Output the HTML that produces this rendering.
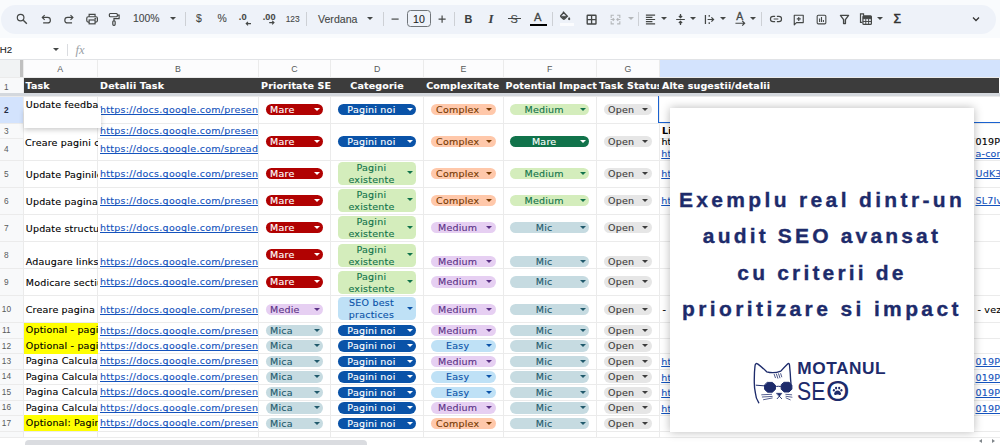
<!DOCTYPE html>
<html lang="ro"><head><meta charset="utf-8"><title>Audit SEO</title>
<style>
*{box-sizing:border-box;margin:0;padding:0}
html,body{width:1000px;height:445px;overflow:hidden;background:#fff}
body{position:relative;-webkit-text-stroke:0.12px currentColor;font-family:"DejaVu Sans","Liberation Sans",sans-serif;font-size:9.5px;color:#000}
#app{position:absolute;left:0;top:0;width:1000px;height:445px;overflow:hidden;background:#fff}
#app div,#app span,#app i{position:absolute}
.topbg{left:0;top:0;width:1000px;height:38px;background:#f9fbfd}
.tb{left:1px;top:4.5px;width:995px;height:29px;border-radius:15px;background:#eef2f9}
.tt{-webkit-text-stroke:0.1px currentColor;font-family:"Liberation Sans",sans-serif;font-size:10.4px;color:#444746;top:13px;line-height:12px;white-space:nowrap}
.sep{top:12px;width:1px;height:14px;background:#cdd0d5}
.dd{width:0;height:0;border-left:3px solid transparent;border-right:3px solid transparent;border-top:3.2px solid #444746;top:18px}
svg{position:absolute;overflow:visible}
.fb{left:0;top:38px;width:1000px;height:21px;background:#fff}
.hl{left:0;width:1000px;height:1px;background:#ebebeb}
.vl{top:60px;width:1px;height:377px;background:#ebebeb}
.rhbg{left:0;top:60px;width:23px;height:377px;background:#f8f9fa}
.corner{left:0;top:60px;width:20px;height:17px;background:#f1f3f4}
.frow{left:0;top:93.3px;width:1000px;height:2.7px;background:#d4d8dd}
.chbg{left:0;top:60px;width:1000px;height:17px;background:#fcfcfd}
.selcol{background:#d3e3fd}
.selrow{background:#d3e3fd}
.freeze{left:20px;top:60px;width:3px;height:17px;background:#c0c0c0}
.cl{-webkit-text-stroke:0;top:60.7px;height:17px;line-height:17px;text-align:center;font-family:"Liberation Sans",sans-serif;font-size:8.8px;color:#575a5a}
.rn{-webkit-text-stroke:0;left:-10.5px;width:33.8px;text-align:center;font-family:"Liberation Sans",sans-serif;font-size:8.3px;color:#575a5a}
.rn.b{font-weight:bold;color:#1f2a44}
.dark{background:#3c3c3c}
.hd{top:77.5px;height:16px;line-height:16.5px;color:#fff;font-weight:bold;font-size:9.5px;white-space:nowrap;overflow:hidden;padding-left:2.5px;letter-spacing:0.17px}
.hd.c{text-align:center;padding-left:0}
.ca{overflow:hidden;white-space:nowrap;font-size:9.5px;letter-spacing:0.18px}
.ca .mid{left:2px;top:calc(50% + 1.1px);transform:translateY(-50%);line-height:12px}
.lk{text-decoration-skip-ink:none;text-underline-offset:1px;letter-spacing:0.27px;color:#1453bd;text-decoration:underline;white-space:nowrap;overflow:hidden;height:13px;line-height:13px;font-size:9.5px}
.chip{border-radius:6px;white-space:nowrap;overflow:hidden}
.chip .ct{left:0;right:11px;top:0;bottom:0;text-align:center;font-size:9.5px;letter-spacing:0.22px;line-height:12.7px}
.chip.m{border-radius:4.5px}
.chip.m .ct{line-height:11.9px;top:0.1px}
.chip .ar{right:3.7px;top:50%;margin-top:-1.9px;width:0;height:0;border-left:3.7px solid transparent;border-right:3.7px solid transparent;border-top:3.9px solid #000}
.chip.la .ct{text-align:left;left:4.5px}
.ht{font-size:9.5px;letter-spacing:0.2px;white-space:nowrap;line-height:11px}
.ht.b{font-weight:bold}
.ht.u{color:#1453bd;text-decoration:underline;text-decoration-skip-ink:none;text-underline-offset:1px}
.sel{border:1.3px solid #1a62d0}
.sb{left:0;top:437px;width:1000px;height:8px;background:#fff;border-top:1px solid #ececec}
.thumb{left:25px;top:439.5px;width:342px;height:8px;border-radius:4px;background:#dadce0}
.redact{left:24px;top:107.800px;width:76.800px;height:20px;background:#fff;box-shadow:0 2px 5px rgba(0,0,0,.2)}
.card{left:670px;top:107.5px;width:304px;height:324.5px;background:#fff;box-shadow:0 0 9px rgba(0,0,0,.28)}
.ctext{-webkit-text-stroke:0.35px #1d2b6b;left:0;width:304px;text-align:center;font-family:"Liberation Sans",sans-serif;font-weight:bold;font-size:21px;letter-spacing:3.17px;color:#1d2b6b;white-space:nowrap;line-height:26px}
.lg1{left:128px;top:251px;font-family:"Liberation Sans",sans-serif;font-weight:bold;font-size:18px;color:#1d2b6b;line-height:20px;letter-spacing:0.2px}
.lg2{left:128px;top:269px;font-family:"Liberation Sans",sans-serif;font-size:28px;color:#1d2b6b;line-height:30px}
</style></head><body>
<div id="app">
<div class="topbg"></div>
<div class="tb"></div>
<svg style="left:14.5px;top:12.1px" width="14.2" height="14.2" viewBox="0 0 24 24" fill="none" stroke="#444746" stroke-width="2" ><circle cx="9.5" cy="9.5" r="5.6"/><path d="M14 14l6 6" stroke-width="2.4"/></svg>
<svg style="left:39.3px;top:12.1px" width="14.2" height="14.2" viewBox="0 0 24 24" fill="none" stroke="#444746" stroke-width="2" ><path d="M7 18.5h7.5a4.75 4.75 0 0 0 0-9.5H6"/><path d="M9.6 5.2L5.6 9.2l4 4" /></svg>
<svg style="left:62.3px;top:12.1px" width="14.2" height="14.2" viewBox="0 0 24 24" fill="none" stroke="#444746" stroke-width="2" ><path d="M17 18.5H9.5a4.75 4.75 0 0 1 0-9.5H18"/><path d="M14.4 5.2l4 4-4 4" /></svg>
<svg style="left:85.3px;top:12.1px" width="14.2" height="14.2" viewBox="0 0 24 24" fill="none" stroke="#444746" stroke-width="2" ><path d="M7 8V4h10v4"/><rect x="3" y="8" width="18" height="9" rx="2.5"/><rect x="7" y="13.5" width="10" height="6.5" fill="#edf2fa"/><circle cx="17.5" cy="11.2" r="0.6" fill="#444746"/></svg>
<svg style="left:107.4px;top:12.1px" width="14.2" height="14.2" viewBox="0 0 24 24" fill="none" stroke="#444746" stroke-width="2" ><rect x="4" y="2.5" width="13.5" height="5.5" rx="1.6"/><path d="M17.5 5.2h3v6H11.800v3.800"/><rect x="9.800" y="15" width="4" height="7.500" rx="1.6"/></svg>
<div class="tt" style="left:133px;font-size:10.4px">100%</div>
<div class="dd" style="left:169.5px;top:17.4px;border-top-color:#444746"></div>
<div class="sep" style="left:184.5px"></div>
<div class="tt" style="left:196px;">$</div>
<div class="tt" style="left:217.5px;">%</div>
<div class="tt" style="left:238.8px;font-size:9.3px;top:10.8px;font-weight:bold">.0</div>
<svg style="left:244.6px;top:19.6px" width="7.2" height="7.2" viewBox="0 0 24 24" fill="none" stroke="#444746" stroke-width="2" ><path d="M4 12h16M10 6l-6 6 6 6" stroke-width="3.6"/></svg>
<div class="tt" style="left:262.8px;font-size:9.1px;top:10.8px;font-weight:bold">.00</div>
<svg style="left:267.9px;top:19.4px" width="7.2" height="7.2" viewBox="0 0 24 24" fill="none" stroke="#444746" stroke-width="2" ><path d="M4 12h16M14 6l6 6-6 6" stroke-width="3.6"/></svg>
<div class="tt" style="left:285.7px;font-size:8.4px;top:12.8px">123</div>
<div class="sep" style="left:306.0px"></div>
<div class="tt" style="left:318px;font-size:10.6px">Verdana</div>
<div class="dd" style="left:367.0px;top:17.4px;border-top-color:#444746"></div>
<div class="sep" style="left:383.2px"></div>
<svg style="left:387.9px;top:12.1px" width="14.2" height="14.2" viewBox="0 0 24 24" fill="none" stroke="#444746" stroke-width="2" ><path d="M6 12h12"/></svg>
<div style="left:407px;top:10px;width:24px;height:17px;border:0.9px solid #70757a;border-radius:3.5px"></div>
<div class="tt" style="left:413px;font-size:10.6px;color:#1f1f1f">10</div>
<svg style="left:434.9px;top:12.1px" width="14.2" height="14.2" viewBox="0 0 24 24" fill="none" stroke="#444746" stroke-width="2" ><path d="M6 12h12M12 6v12"/></svg>
<div class="sep" style="left:454.0px"></div>
<div class="tt" style="left:464.6px;font-weight:bold;font-size:10.8px;color:#3c4043">B</div>
<div class="tt" style="left:488.6px;font-style:italic;font-family:'Liberation Serif',serif;font-weight:bold;font-size:12.6px;color:#3c4043;top:12.6px">I</div>
<div class="tt" style="left:510.5px;font-size:11px">S</div>
<div style="left:508px;top:18.2px;width:13px;height:1.3px;background:#444746"></div>
<div class="tt" style="left:534px;font-size:11.2px;top:10.6px;-webkit-text-stroke:0.3px #444746">A</div>
<div style="left:529.5px;top:23.5px;width:17px;height:2.6px;background:#000"></div>
<div class="sep" style="left:552.0px"></div>
<svg style="left:559.2px;top:10.1px" width="12.5" height="12.5" viewBox="0 0 24 24" fill="none" stroke="#444746" stroke-width="2" ><path d="M7.500 3.500L16 12l-5.500 5.500a1.600 1.600 0 0 1-2.200 0L3.600 12.800a1.600 1.600 0 0 1 0-2.200L10.200 4" stroke-width="2.6"/><path d="M4.500 12h10.500l-5.700 5.200z" fill="#444746" stroke-width="1"/><path d="M19.500 13.500s-2.200 2.600-2.200 4a2.200 2.200 0 0 0 4.400 0c0-1.400-2.200-4-2.200-4z" fill="#444746" stroke="none"/></svg>
<div style="left:559.5px;top:23.300px;width:14px;height:2.400px;background:rgba(255,255,255,.75)"></div>
<svg style="left:584.7px;top:12.6px" width="13.2" height="13.2" viewBox="0 0 24 24" fill="none" stroke="#444746" stroke-width="2" ><rect x="4" y="4" width="16" height="16" rx="1" stroke-width="2.500"/><path d="M12 4v16M4 12h16" stroke-width="2.400"/></svg>
<svg style="left:609.2px;top:12.7px" width="13" height="13" viewBox="0 0 24 24" fill="none" stroke="#444746" stroke-width="2" ><path d="M9 4H4v5M15 4h5v5M9 20H4v-5M15 20h5v-5M3 12h6M21 12h-6M7 9.5l2.5 2.5L7 14.5M17 9.5L14.5 12l2.5 2.5" stroke="#b4b7ba"/></svg>
<div class="dd" style="left:627.7px;top:17.4px;border-top-color:#b4b7ba"></div>
<div class="sep" style="left:637.5px"></div>
<svg style="left:644.3px;top:12.7px" width="13" height="13" viewBox="0 0 24 24" fill="none" stroke="#444746" stroke-width="2" ><path d="M3.500 4h17M3.500 8h12M3.500 12h17M3.500 16h12M3.500 20h17" stroke-width="2.300"/></svg>
<div class="dd" style="left:660.7px;top:17.4px;border-top-color:#444746"></div>
<svg style="left:674.0px;top:12.7px" width="13" height="13" viewBox="0 0 24 24" fill="none" stroke="#444746" stroke-width="2" ><path d="M4 12h16M12 2v6M9 5.500l3 3 3-3M12 22v-6M9 18.500l3-3 3 3" stroke-width="2.300"/></svg>
<div class="dd" style="left:690.0px;top:17.4px;border-top-color:#444746"></div>
<svg style="left:703.0px;top:12.7px" width="13" height="13" viewBox="0 0 24 24" fill="none" stroke="#444746" stroke-width="2" ><path d="M4.500 3.500v17M11.500 3.500v3.500M11.500 17v3.500M8.500 12h10.500M15.500 8l4 4-4 4" stroke-width="2.300"/></svg>
<div class="dd" style="left:720.0px;top:17.4px;border-top-color:#444746"></div>
<div class="tt" style="left:736.3px;font-size:10.400px;top:11.300px;-webkit-text-stroke:0.300px #444746">A</div>
<svg style="left:735.0px;top:17.9px" width="10.5" height="10.5" viewBox="0 0 24 24" fill="none" stroke="#444746" stroke-width="2" ><path d="M1 12h21M16.500 6.500l5.500 5.500-5.500 5.500" stroke-width="2.800"/></svg>
<div class="dd" style="left:750.0px;top:17.4px;border-top-color:#444746"></div>
<div class="sep" style="left:760.5px"></div>
<svg style="left:768.7px;top:12.2px" width="14" height="14" viewBox="0 0 24 24" fill="none" stroke="#444746" stroke-width="2" ><path d="M10.5 7.5H7a4.5 4.5 0 0 0 0 9h3.5M13.5 7.5H17a4.5 4.5 0 0 1 0 9h-3.5M8 12h8"/></svg>
<svg style="left:792.0px;top:12.6px" width="13.5" height="13.5" viewBox="0 0 24 24" fill="none" stroke="#444746" stroke-width="2" ><path d="M4 4h16v13H8l-4 4z" stroke-linejoin="round"/><path d="M12 7v7M8.5 10.5h7"/></svg>
<svg style="left:815.2px;top:12.7px" width="13" height="13" viewBox="0 0 24 24" fill="none" stroke="#444746" stroke-width="2" ><rect x="4" y="4" width="16" height="16" rx="2"/><path d="M8.5 10v6.5M12 7.5v9M15.5 13v3.5"/></svg>
<svg style="left:837.8px;top:12.7px" width="13" height="13" viewBox="0 0 24 24" fill="none" stroke="#444746" stroke-width="2" ><path d="M4.500 4.500h15l-5.800 7.800v7.200h-3.400v-7.200z" stroke-linejoin="round" stroke-width="2.500"/></svg>
<svg style="left:858.8px;top:11.9px" width="14.5" height="14.5" viewBox="0 0 24 24" fill="none" stroke="#444746" stroke-width="2" ><path d="M7.5 6V3h-5v14h3" /><rect x="6.5" y="6.5" width="14" height="14" rx="1.5"/><rect x="6.500" y="6.500" width="14" height="4.500" fill="#444746" stroke="none"/><path d="M6.5 11h14M11.2 11v9.5M15.9 11v9.5M6.5 15.7h14" stroke-width="1.6"/></svg>
<div class="dd" style="left:876.5px;top:17.4px;border-top-color:#444746"></div>
<div class="tt" style="left:893.6px;font-size:12.200px;top:13.400px;color:#333;-webkit-text-stroke:0.500px #333">Σ</div>
<svg style="left:969.5px;top:13.0px" width="12" height="12" viewBox="0 0 24 24" fill="none" stroke="#444746" stroke-width="2" ><path d="M6 9l6 6 6-6" stroke-width="2.500" stroke="#333"/></svg>
<div class="fb"></div>
<div class="tt" style="left:-0.3px;top:44.200px;color:#202124;font-size:9.700px">H2</div>
<div class="dd" style="left:52.5px;top:48px"></div>
<div class="sep" style="left:67px;top:44px;height:12px;background:#dadce0"></div>
<div style="left:75.500px;top:43.300px;font-family:'Liberation Serif',serif;font-style:italic;font-size:12.500px;color:#9aa0a6;line-height:14px;-webkit-text-stroke:0">fx</div>
<div style="left:0;top:58.5px;width:1000px;height:1px;background:#e1e3e6"></div>
<div class="hl" style="top:76.5px"></div>
<div class="hl" style="top:95.5px"></div>
<div class="hl" style="top:122.5px"></div>
<div class="hl" style="top:137.9px"></div>
<div class="hl" style="top:159.5px"></div>
<div class="hl" style="top:186.5px"></div>
<div class="hl" style="top:213.5px"></div>
<div class="hl" style="top:240.5px"></div>
<div class="hl" style="top:267.5px"></div>
<div class="hl" style="top:294.5px"></div>
<div class="hl" style="top:322.3px"></div>
<div class="hl" style="top:337.8px"></div>
<div class="hl" style="top:353.2px"></div>
<div class="hl" style="top:368.7px"></div>
<div class="hl" style="top:384.1px"></div>
<div class="hl" style="top:399.6px"></div>
<div class="hl" style="top:415.1px"></div>
<div class="hl" style="top:430.5px"></div>
<div class="hl" style="top:436.5px"></div>
<div style="left:23px;top:137.4px;width:74.6px;height:2px;background:#fff"></div>
<div style="left:258.5px;top:137.4px;width:400.9px;height:2px;background:#fff"></div>
<div class="vl" style="left:22.5px"></div>
<div class="vl" style="left:97.1px"></div>
<div class="vl" style="left:258.0px"></div>
<div class="vl" style="left:330.0px"></div>
<div class="vl" style="left:423.2px"></div>
<div class="vl" style="left:502.5px"></div>
<div class="vl" style="left:596.1px"></div>
<div class="vl" style="left:658.9px"></div>
<div class="rhbg"></div><div class="chbg"></div><div class="corner"></div>
<div class="selcol" style="left:659.4px;top:60px;width:340.6px;height:17px"></div>
<div class="selrow" style="left:0;top:96px;width:23px;height:27px"></div>
<div class="freeze"></div>
<div class="hl" style="top:76.5px;width:23px"></div>
<div class="hl" style="top:95.5px;width:23px"></div>
<div class="hl" style="top:122.5px;width:23px"></div>
<div class="hl" style="top:137.9px;width:23px"></div>
<div class="hl" style="top:159.5px;width:23px"></div>
<div class="hl" style="top:186.5px;width:23px"></div>
<div class="hl" style="top:213.5px;width:23px"></div>
<div class="hl" style="top:240.5px;width:23px"></div>
<div class="hl" style="top:267.5px;width:23px"></div>
<div class="hl" style="top:294.5px;width:23px"></div>
<div class="hl" style="top:322.3px;width:23px"></div>
<div class="hl" style="top:337.8px;width:23px"></div>
<div class="hl" style="top:353.2px;width:23px"></div>
<div class="hl" style="top:368.7px;width:23px"></div>
<div class="hl" style="top:384.1px;width:23px"></div>
<div class="hl" style="top:399.6px;width:23px"></div>
<div class="hl" style="top:415.1px;width:23px"></div>
<div class="hl" style="top:430.5px;width:23px"></div>
<div class="hl" style="top:436.5px;width:23px"></div>
<div class="vl" style="left:22.5px;height:17px"></div>
<div class="vl" style="left:97.1px;height:17px"></div>
<div class="vl" style="left:258.0px;height:17px"></div>
<div class="vl" style="left:330.0px;height:17px"></div>
<div class="vl" style="left:423.2px;height:17px"></div>
<div class="vl" style="left:502.5px;height:17px"></div>
<div class="vl" style="left:596.1px;height:17px"></div>
<div class="vl" style="left:658.9px;height:17px"></div>
<div class="frow"></div>
<div class="cl" style="left:23px;width:74.6px">A</div>
<div class="cl" style="left:97.6px;width:160.9px">B</div>
<div class="cl" style="left:258.5px;width:72.0px">C</div>
<div class="cl" style="left:330.5px;width:93.19999999999999px">D</div>
<div class="cl" style="left:423.7px;width:79.30000000000001px">E</div>
<div class="cl" style="left:503px;width:93.60000000000002px">F</div>
<div class="cl" style="left:596.6px;width:62.799999999999955px">G</div>
<div class="rn" style="top:77.7px;height:19px;line-height:19px">1</div>
<div class="rn b" style="top:96.7px;height:27px;line-height:27px">2</div>
<div class="rn" style="top:123.7px;height:15.400000000000006px;line-height:15.400000000000006px">3</div>
<div class="rn" style="top:139.1px;height:21.599999999999994px;line-height:21.599999999999994px">4</div>
<div class="rn" style="top:160.7px;height:27px;line-height:27px">5</div>
<div class="rn" style="top:187.7px;height:27px;line-height:27px">6</div>
<div class="rn" style="top:214.7px;height:27px;line-height:27px">7</div>
<div class="rn" style="top:241.7px;height:27px;line-height:27px">8</div>
<div class="rn" style="top:268.7px;height:27px;line-height:27px">9</div>
<div class="rn" style="top:295.7px;height:27.80000000000001px;line-height:27.80000000000001px">10</div>
<div class="rn" style="top:323.0px;height:15.5px;line-height:15.5px">11</div>
<div class="rn" style="top:338.5px;height:15.399999999999977px;line-height:15.399999999999977px">12</div>
<div class="rn" style="top:353.9px;height:15.5px;line-height:15.5px">13</div>
<div class="rn" style="top:369.4px;height:15.400000000000034px;line-height:15.400000000000034px">14</div>
<div class="rn" style="top:384.8px;height:15.5px;line-height:15.5px">15</div>
<div class="rn" style="top:400.3px;height:15.5px;line-height:15.5px">16</div>
<div class="rn" style="top:415.8px;height:15.399999999999977px;line-height:15.399999999999977px">17</div>
<div class="dark" style="left:23.5px;top:77.7px;width:975px;height:15.6px"></div>
<div class="hd l" style="left:23px;width:74.6px">Task</div>
<div class="hd l" style="left:97.6px;width:160.9px">Detalii Task</div>
<div class="hd l" style="left:258.5px;width:72.0px">Prioritate SE</div>
<div class="hd c" style="left:330.5px;width:93.19999999999999px">Categorie</div>
<div class="hd l" style="left:423.7px;width:79.30000000000001px">Complexitate</div>
<div class="hd l" style="left:503px;width:93.60000000000002px">Potential Impact</div>
<div class="hd l" style="left:596.6px;width:62.799999999999955px">Task Status</div>
<div class="hd l" style="left:659.4px;width:340.6px">Alte sugestii/detalii</div>
<div class="ca" style="left:23px;top:96px;width:74.6px;height:27px"><span style="position:absolute;left:2.8px;top:2.9px">Update feedba</span></div>
<div class="ca" style="left:23px;top:123px;width:74.6px;height:38.6px"><span class="mid">Creare pagini c</span></div>
<div class="ca" style="left:23.8px;top:159.8px;width:74.1px;height:27.2px;"><span class="mid" style="margin-top:0.3px">Update Paginile</span></div>
<div class="ca" style="left:23.8px;top:186.8px;width:74.1px;height:27.2px;"><span class="mid" style="margin-top:0.3px">Update pagina</span></div>
<div class="ca" style="left:23.8px;top:213.8px;width:74.1px;height:27.2px;"><span class="mid" style="margin-top:0.3px">Update structu</span></div>
<div class="ca" style="left:23px;top:241px;width:74.6px;height:27px"><span style="position:absolute;left:2.8px;bottom:1px">Adaugare links</span></div>
<div class="ca" style="left:23.8px;top:267.8px;width:74.1px;height:27.2px;"><span class="mid" style="margin-top:0.3px">Modicare sectiu</span></div>
<div class="ca" style="left:23.8px;top:294.8px;width:74.1px;height:28.00000000000001px;"><span class="mid" style="margin-top:0.3px">Creare pagina</span></div>
<div class="ca" style="left:23.8px;top:322.6px;width:74.1px;height:15.7px;background:#ffff00;"><span class="mid" style="margin-top:-1.1px">Optional - pagi</span></div>
<div class="ca" style="left:23.8px;top:338.1px;width:74.1px;height:15.599999999999977px;background:#ffff00;"><span class="mid" style="margin-top:-1.1px">Optional - pagi</span></div>
<div class="ca" style="left:23.8px;top:353.5px;width:74.1px;height:15.7px;"><span class="mid" style="margin-top:-1.1px">Pagina Calculat</span></div>
<div class="ca" style="left:23.8px;top:369.0px;width:74.1px;height:15.600000000000033px;"><span class="mid" style="margin-top:-1.1px">Pagina Calculat</span></div>
<div class="ca" style="left:23.8px;top:384.40000000000003px;width:74.1px;height:15.7px;"><span class="mid" style="margin-top:-1.1px">Pagina Calculat</span></div>
<div class="ca" style="left:23.8px;top:399.90000000000003px;width:74.1px;height:15.7px;"><span class="mid" style="margin-top:-1.1px">Pagina Calculat</span></div>
<div class="ca" style="left:23.8px;top:415.40000000000003px;width:74.1px;height:15.599999999999977px;background:#ffff00;"><span class="mid" style="margin-top:-1.1px">Optional: Pagin</span></div>
<div class="lk" style="left:100.0px;top:103.4px;width:157.9px">https://docs.google.com/presen</div>
<div class="lk" style="left:100.0px;top:123.9px;width:157.9px">https://docs.google.com/presen</div>
<div class="lk" style="left:100.0px;top:142.4px;width:157.9px">https://docs.google.com/spread</div>
<div class="lk" style="left:100.0px;top:166.9px;width:157.9px">https://docs.google.com/presen</div>
<div class="lk" style="left:100.0px;top:193.9px;width:157.9px">https://docs.google.com/presen</div>
<div class="lk" style="left:100.0px;top:220.9px;width:157.9px">https://docs.google.com/presen</div>
<div class="lk" style="left:100.0px;top:254.9px;width:157.9px">https://docs.google.com/presen</div>
<div class="lk" style="left:100.0px;top:274.9px;width:157.9px">https://docs.google.com/presen</div>
<div class="lk" style="left:100.0px;top:302.9px;width:157.9px">https://docs.google.com/presen</div>
<div class="lk" style="left:100.0px;top:323.5px;width:157.9px">https://docs.google.com/presen</div>
<div class="lk" style="left:100.0px;top:338.95px;width:157.9px">https://docs.google.com/presen</div>
<div class="lk" style="left:100.0px;top:354.4px;width:157.9px">https://docs.google.com/presen</div>
<div class="lk" style="left:100.0px;top:369.84999999999997px;width:157.9px">https://docs.google.com/presen</div>
<div class="lk" style="left:100.0px;top:385.3px;width:157.9px">https://docs.google.com/presen</div>
<div class="lk" style="left:100.0px;top:400.8px;width:157.9px">https://docs.google.com/presen</div>
<div class="lk" style="left:100.0px;top:416.25px;width:157.9px">https://docs.google.com/presen</div>
<div class="chip la" style="left:265.5px;top:103.9px;width:57.69999999999999px;height:11.6px;background:#b10202;color:#fff"><span class="ct">Mare</span><i class="ar" style="border-top-color:#fff"></i></div>
<div class="chip la" style="left:265.5px;top:135.9px;width:57.69999999999999px;height:11.6px;background:#b10202;color:#fff"><span class="ct">Mare</span><i class="ar" style="border-top-color:#fff"></i></div>
<div class="chip la" style="left:265.5px;top:167.7px;width:57.69999999999999px;height:11.6px;background:#b10202;color:#fff"><span class="ct">Mare</span><i class="ar" style="border-top-color:#fff"></i></div>
<div class="chip la" style="left:265.5px;top:194.7px;width:57.69999999999999px;height:11.6px;background:#b10202;color:#fff"><span class="ct">Mare</span><i class="ar" style="border-top-color:#fff"></i></div>
<div class="chip la" style="left:265.5px;top:221.7px;width:57.69999999999999px;height:11.6px;background:#b10202;color:#fff"><span class="ct">Mare</span><i class="ar" style="border-top-color:#fff"></i></div>
<div class="chip la" style="left:265.5px;top:248.7px;width:57.69999999999999px;height:11.6px;background:#b10202;color:#fff"><span class="ct">Mare</span><i class="ar" style="border-top-color:#fff"></i></div>
<div class="chip la" style="left:265.5px;top:276.1px;width:57.69999999999999px;height:11.6px;background:#b10202;color:#fff"><span class="ct">Mare</span><i class="ar" style="border-top-color:#fff"></i></div>
<div class="chip la" style="left:265.5px;top:303.8px;width:57.69999999999999px;height:11.6px;background:#e6cff2;color:#5a3286"><span class="ct">Medie</span><i class="ar" style="border-top-color:#5a3286"></i></div>
<div class="chip la" style="left:265.5px;top:324.8px;width:57.69999999999999px;height:11.6px;background:#c6dbe1;color:#215a6c"><span class="ct">Mica</span><i class="ar" style="border-top-color:#215a6c"></i></div>
<div class="chip la" style="left:265.5px;top:340.2px;width:57.69999999999999px;height:11.6px;background:#c6dbe1;color:#215a6c"><span class="ct">Mica</span><i class="ar" style="border-top-color:#215a6c"></i></div>
<div class="chip la" style="left:265.5px;top:355.7px;width:57.69999999999999px;height:11.6px;background:#c6dbe1;color:#215a6c"><span class="ct">Mica</span><i class="ar" style="border-top-color:#215a6c"></i></div>
<div class="chip la" style="left:265.5px;top:371.1px;width:57.69999999999999px;height:11.6px;background:#c6dbe1;color:#215a6c"><span class="ct">Mica</span><i class="ar" style="border-top-color:#215a6c"></i></div>
<div class="chip la" style="left:265.5px;top:386.6px;width:57.69999999999999px;height:11.6px;background:#c6dbe1;color:#215a6c"><span class="ct">Mica</span><i class="ar" style="border-top-color:#215a6c"></i></div>
<div class="chip la" style="left:265.5px;top:402.1px;width:57.69999999999999px;height:11.6px;background:#c6dbe1;color:#215a6c"><span class="ct">Mica</span><i class="ar" style="border-top-color:#215a6c"></i></div>
<div class="chip la" style="left:265.5px;top:417.6px;width:57.69999999999999px;height:11.6px;background:#c6dbe1;color:#215a6c"><span class="ct">Mica</span><i class="ar" style="border-top-color:#215a6c"></i></div>
<div class="chip" style="left:337.5px;top:103.9px;width:78.89999999999998px;height:11.6px;background:#0a53a8;color:#fff"><span class="ct">Pagini noi</span><i class="ar" style="border-top-color:#fff"></i></div>
<div class="chip" style="left:337.5px;top:135.9px;width:78.89999999999998px;height:11.6px;background:#0a53a8;color:#fff"><span class="ct">Pagini noi</span><i class="ar" style="border-top-color:#fff"></i></div>
<div class="chip m" style="left:337.5px;top:161.8px;width:78.89999999999998px;height:23px;background:#d4edbc;color:#11734b"><span class="ct">Pagini<br>existente</span><i class="ar" style="border-top-color:#11734b"></i></div>
<div class="chip m" style="left:337.5px;top:188.8px;width:78.89999999999998px;height:23px;background:#d4edbc;color:#11734b"><span class="ct">Pagini<br>existente</span><i class="ar" style="border-top-color:#11734b"></i></div>
<div class="chip m" style="left:337.5px;top:216.0px;width:78.89999999999998px;height:23px;background:#d4edbc;color:#11734b"><span class="ct">Pagini<br>existente</span><i class="ar" style="border-top-color:#11734b"></i></div>
<div class="chip m" style="left:337.5px;top:243.5px;width:78.89999999999998px;height:23px;background:#d4edbc;color:#11734b"><span class="ct">Pagini<br>existente</span><i class="ar" style="border-top-color:#11734b"></i></div>
<div class="chip m" style="left:337.5px;top:270.5px;width:78.89999999999998px;height:23px;background:#d4edbc;color:#11734b"><span class="ct">Pagini<br>existente</span><i class="ar" style="border-top-color:#11734b"></i></div>
<div class="chip m" style="left:337.5px;top:297.3px;width:78.89999999999998px;height:23px;background:#bfe1f6;color:#0a53a8"><span class="ct">SEO best<br>practices</span><i class="ar" style="border-top-color:#0a53a8"></i></div>
<div class="chip" style="left:337.5px;top:324.8px;width:78.89999999999998px;height:11.6px;background:#0a53a8;color:#fff"><span class="ct">Pagini noi</span><i class="ar" style="border-top-color:#fff"></i></div>
<div class="chip" style="left:337.5px;top:340.2px;width:78.89999999999998px;height:11.6px;background:#0a53a8;color:#fff"><span class="ct">Pagini noi</span><i class="ar" style="border-top-color:#fff"></i></div>
<div class="chip" style="left:337.5px;top:355.7px;width:78.89999999999998px;height:11.6px;background:#0a53a8;color:#fff"><span class="ct">Pagini noi</span><i class="ar" style="border-top-color:#fff"></i></div>
<div class="chip" style="left:337.5px;top:371.1px;width:78.89999999999998px;height:11.6px;background:#0a53a8;color:#fff"><span class="ct">Pagini noi</span><i class="ar" style="border-top-color:#fff"></i></div>
<div class="chip" style="left:337.5px;top:386.6px;width:78.89999999999998px;height:11.6px;background:#0a53a8;color:#fff"><span class="ct">Pagini noi</span><i class="ar" style="border-top-color:#fff"></i></div>
<div class="chip" style="left:337.5px;top:402.1px;width:78.89999999999998px;height:11.6px;background:#0a53a8;color:#fff"><span class="ct">Pagini noi</span><i class="ar" style="border-top-color:#fff"></i></div>
<div class="chip" style="left:337.5px;top:417.6px;width:78.89999999999998px;height:11.6px;background:#0a53a8;color:#fff"><span class="ct">Pagini noi</span><i class="ar" style="border-top-color:#fff"></i></div>
<div class="chip" style="left:430.7px;top:103.9px;width:65.0px;height:11.6px;background:#ffc8aa;color:#753800"><span class="ct">Complex</span><i class="ar" style="border-top-color:#753800"></i></div>
<div class="chip" style="left:430.7px;top:135.9px;width:65.0px;height:11.6px;background:#ffc8aa;color:#753800"><span class="ct">Complex</span><i class="ar" style="border-top-color:#753800"></i></div>
<div class="chip" style="left:430.7px;top:167.7px;width:65.0px;height:11.6px;background:#ffc8aa;color:#753800"><span class="ct">Complex</span><i class="ar" style="border-top-color:#753800"></i></div>
<div class="chip" style="left:430.7px;top:194.7px;width:65.0px;height:11.6px;background:#ffc8aa;color:#753800"><span class="ct">Complex</span><i class="ar" style="border-top-color:#753800"></i></div>
<div class="chip" style="left:430.7px;top:221.7px;width:65.0px;height:11.6px;background:#e6cff2;color:#5a3286"><span class="ct">Medium</span><i class="ar" style="border-top-color:#5a3286"></i></div>
<div class="chip" style="left:430.7px;top:255.8px;width:65.0px;height:11.6px;background:#e6cff2;color:#5a3286"><span class="ct">Medium</span><i class="ar" style="border-top-color:#5a3286"></i></div>
<div class="chip" style="left:430.7px;top:276.1px;width:65.0px;height:11.6px;background:#e6cff2;color:#5a3286"><span class="ct">Medium</span><i class="ar" style="border-top-color:#5a3286"></i></div>
<div class="chip" style="left:430.7px;top:303.8px;width:65.0px;height:11.6px;background:#e6cff2;color:#5a3286"><span class="ct">Medium</span><i class="ar" style="border-top-color:#5a3286"></i></div>
<div class="chip" style="left:430.7px;top:324.8px;width:65.0px;height:11.6px;background:#e6cff2;color:#5a3286"><span class="ct">Medium</span><i class="ar" style="border-top-color:#5a3286"></i></div>
<div class="chip" style="left:430.7px;top:340.2px;width:65.0px;height:11.6px;background:#bfe1f6;color:#0a53a8"><span class="ct">Easy</span><i class="ar" style="border-top-color:#0a53a8"></i></div>
<div class="chip" style="left:430.7px;top:355.7px;width:65.0px;height:11.6px;background:#e6cff2;color:#5a3286"><span class="ct">Medium</span><i class="ar" style="border-top-color:#5a3286"></i></div>
<div class="chip" style="left:430.7px;top:371.1px;width:65.0px;height:11.6px;background:#bfe1f6;color:#0a53a8"><span class="ct">Easy</span><i class="ar" style="border-top-color:#0a53a8"></i></div>
<div class="chip" style="left:430.7px;top:386.6px;width:65.0px;height:11.6px;background:#bfe1f6;color:#0a53a8"><span class="ct">Easy</span><i class="ar" style="border-top-color:#0a53a8"></i></div>
<div class="chip" style="left:430.7px;top:402.1px;width:65.0px;height:11.6px;background:#e6cff2;color:#5a3286"><span class="ct">Medium</span><i class="ar" style="border-top-color:#5a3286"></i></div>
<div class="chip" style="left:430.7px;top:417.6px;width:65.0px;height:11.6px;background:#ffc8aa;color:#753800"><span class="ct">Complex</span><i class="ar" style="border-top-color:#753800"></i></div>
<div class="chip" style="left:510px;top:103.9px;width:79.30000000000007px;height:11.6px;background:#d4edbc;color:#11734b"><span class="ct">Medium</span><i class="ar" style="border-top-color:#11734b"></i></div>
<div class="chip" style="left:510px;top:135.9px;width:79.30000000000007px;height:11.6px;background:#11734b;color:#fff"><span class="ct">Mare</span><i class="ar" style="border-top-color:#fff"></i></div>
<div class="chip" style="left:510px;top:167.7px;width:79.30000000000007px;height:11.6px;background:#d4edbc;color:#11734b"><span class="ct">Medium</span><i class="ar" style="border-top-color:#11734b"></i></div>
<div class="chip" style="left:510px;top:194.7px;width:79.30000000000007px;height:11.6px;background:#d4edbc;color:#11734b"><span class="ct">Medium</span><i class="ar" style="border-top-color:#11734b"></i></div>
<div class="chip" style="left:510px;top:221.7px;width:79.30000000000007px;height:11.6px;background:#c6dbe1;color:#215a6c"><span class="ct">Mic</span><i class="ar" style="border-top-color:#215a6c"></i></div>
<div class="chip" style="left:510px;top:255.8px;width:79.30000000000007px;height:11.6px;background:#c6dbe1;color:#215a6c"><span class="ct">Mic</span><i class="ar" style="border-top-color:#215a6c"></i></div>
<div class="chip" style="left:510px;top:276.1px;width:79.30000000000007px;height:11.6px;background:#c6dbe1;color:#215a6c"><span class="ct">Mic</span><i class="ar" style="border-top-color:#215a6c"></i></div>
<div class="chip" style="left:510px;top:303.8px;width:79.30000000000007px;height:11.6px;background:#c6dbe1;color:#215a6c"><span class="ct">Mic</span><i class="ar" style="border-top-color:#215a6c"></i></div>
<div class="chip" style="left:510px;top:324.8px;width:79.30000000000007px;height:11.6px;background:#c6dbe1;color:#215a6c"><span class="ct">Mic</span><i class="ar" style="border-top-color:#215a6c"></i></div>
<div class="chip" style="left:510px;top:340.2px;width:79.30000000000007px;height:11.6px;background:#c6dbe1;color:#215a6c"><span class="ct">Mic</span><i class="ar" style="border-top-color:#215a6c"></i></div>
<div class="chip" style="left:510px;top:355.7px;width:79.30000000000007px;height:11.6px;background:#c6dbe1;color:#215a6c"><span class="ct">Mic</span><i class="ar" style="border-top-color:#215a6c"></i></div>
<div class="chip" style="left:510px;top:371.1px;width:79.30000000000007px;height:11.6px;background:#c6dbe1;color:#215a6c"><span class="ct">Mic</span><i class="ar" style="border-top-color:#215a6c"></i></div>
<div class="chip" style="left:510px;top:386.6px;width:79.30000000000007px;height:11.6px;background:#c6dbe1;color:#215a6c"><span class="ct">Mic</span><i class="ar" style="border-top-color:#215a6c"></i></div>
<div class="chip" style="left:510px;top:402.1px;width:79.30000000000007px;height:11.6px;background:#c6dbe1;color:#215a6c"><span class="ct">Mic</span><i class="ar" style="border-top-color:#215a6c"></i></div>
<div class="chip" style="left:510px;top:417.6px;width:79.30000000000007px;height:11.6px;background:#c6dbe1;color:#215a6c"><span class="ct">Mic</span><i class="ar" style="border-top-color:#215a6c"></i></div>
<div class="chip la" style="left:603.6px;top:103.9px;width:48.5px;height:11.6px;background:#e6e6e6;color:#3d3d3d"><span class="ct">Open</span><i class="ar" style="border-top-color:#3d3d3d"></i></div>
<div class="chip la" style="left:603.6px;top:135.9px;width:48.5px;height:11.6px;background:#e6e6e6;color:#3d3d3d"><span class="ct">Open</span><i class="ar" style="border-top-color:#3d3d3d"></i></div>
<div class="chip la" style="left:603.6px;top:167.7px;width:48.5px;height:11.6px;background:#e6e6e6;color:#3d3d3d"><span class="ct">Open</span><i class="ar" style="border-top-color:#3d3d3d"></i></div>
<div class="chip la" style="left:603.6px;top:194.7px;width:48.5px;height:11.6px;background:#e6e6e6;color:#3d3d3d"><span class="ct">Open</span><i class="ar" style="border-top-color:#3d3d3d"></i></div>
<div class="chip la" style="left:603.6px;top:221.7px;width:48.5px;height:11.6px;background:#e6e6e6;color:#3d3d3d"><span class="ct">Open</span><i class="ar" style="border-top-color:#3d3d3d"></i></div>
<div class="chip la" style="left:603.6px;top:255.8px;width:48.5px;height:11.6px;background:#e6e6e6;color:#3d3d3d"><span class="ct">Open</span><i class="ar" style="border-top-color:#3d3d3d"></i></div>
<div class="chip la" style="left:603.6px;top:276.1px;width:48.5px;height:11.6px;background:#e6e6e6;color:#3d3d3d"><span class="ct">Open</span><i class="ar" style="border-top-color:#3d3d3d"></i></div>
<div class="chip la" style="left:603.6px;top:303.8px;width:48.5px;height:11.6px;background:#e6e6e6;color:#3d3d3d"><span class="ct">Open</span><i class="ar" style="border-top-color:#3d3d3d"></i></div>
<div class="chip la" style="left:603.6px;top:324.8px;width:48.5px;height:11.6px;background:#e6e6e6;color:#3d3d3d"><span class="ct">Open</span><i class="ar" style="border-top-color:#3d3d3d"></i></div>
<div class="chip la" style="left:603.6px;top:340.2px;width:48.5px;height:11.6px;background:#e6e6e6;color:#3d3d3d"><span class="ct">Open</span><i class="ar" style="border-top-color:#3d3d3d"></i></div>
<div class="chip la" style="left:603.6px;top:355.7px;width:48.5px;height:11.6px;background:#e6e6e6;color:#3d3d3d"><span class="ct">Open</span><i class="ar" style="border-top-color:#3d3d3d"></i></div>
<div class="chip la" style="left:603.6px;top:371.1px;width:48.5px;height:11.6px;background:#e6e6e6;color:#3d3d3d"><span class="ct">Open</span><i class="ar" style="border-top-color:#3d3d3d"></i></div>
<div class="chip la" style="left:603.6px;top:386.6px;width:48.5px;height:11.6px;background:#e6e6e6;color:#3d3d3d"><span class="ct">Open</span><i class="ar" style="border-top-color:#3d3d3d"></i></div>
<div class="chip la" style="left:603.6px;top:402.1px;width:48.5px;height:11.6px;background:#e6e6e6;color:#3d3d3d"><span class="ct">Open</span><i class="ar" style="border-top-color:#3d3d3d"></i></div>
<div class="chip la" style="left:603.6px;top:417.6px;width:48.5px;height:11.6px;background:#e6e6e6;color:#3d3d3d"><span class="ct">Open</span><i class="ar" style="border-top-color:#3d3d3d"></i></div>
<div class="ht b" style="left:662.0px;top:125.0px">Li</div>
<div class="ht " style="left:661.4px;top:136.3px">ht</div>
<div class="ht u" style="left:661.1999999999999px;top:148.0px">ht</div>
<div class="ht u" style="left:661.1999999999999px;top:168.3px">ht</div>
<div class="ht u" style="left:661.1999999999999px;top:195.3px">ht</div>
<div class="ht " style="left:662.4px;top:303.8px">-</div>
<div class="ht " style="left:975.5px;top:136.3px">019P</div>
<div class="ht u" style="left:975.5px;top:148.0px">a-cor</div>
<div class="ht u" style="left:975.5px;top:168.3px">UdK3</div>
<div class="ht u" style="left:975.5px;top:195.3px">SL7Iv</div>
<div class="ht " style="left:977.5px;top:304.1px">- vezi</div>
<div class="ht u" style="left:661.1999999999999px;top:356.3px">ht</div>
<div class="ht u" style="left:975.5px;top:356.3px">019P</div>
<div class="ht u" style="left:661.1999999999999px;top:371.8px">ht</div>
<div class="ht u" style="left:975.5px;top:371.8px">019P</div>
<div class="ht u" style="left:661.1999999999999px;top:387.2px">ht</div>
<div class="ht u" style="left:975.5px;top:387.2px">019P</div>
<div class="ht u" style="left:661.1999999999999px;top:402.7px">ht</div>
<div class="ht u" style="left:975.5px;top:402.7px">019P</div>
<div class="sel" style="left:658.1px;top:93.5px;width:400px;height:29.5px"></div>
<div class="frow" style="left:600px;width:400px"></div>
<div class="redact"></div>
<div class="sb"></div><div class="thumb"></div>
<div style="left:978.5px;top:439.3px;width:0;height:0;border-top:2.2px solid transparent;border-bottom:2.2px solid transparent;border-right:3px solid #80868b"></div>
<div style="left:991.5px;top:439.3px;width:0;height:0;border-top:2.2px solid transparent;border-bottom:2.2px solid transparent;border-left:3px solid #80868b"></div>
<div class="card">
 <div class="ctext" style="top:79.900px;letter-spacing:3.350px">Exemplu real dintr-un</div>
 <div class="ctext" style="top:115.900px">audit SEO avansat</div>
 <div class="ctext" style="top:152px">cu criterii de</div>
 <div class="ctext" style="top:188.800px;letter-spacing:3.380px">prioritizare si impact</div>
</div>
<svg style="left:0;top:0" width="1000" height="445" viewBox="0 0 1000 445" fill="none" stroke="#1d2b6b" stroke-width="1.1" stroke-linecap="round" stroke-linejoin="round">
<!-- cat head outline -->
<path d="M758.8 402.8 C756.6 399.6 755.6 396.6 755.4 393 C754.6 389 754.3 386 754.3 383 C754.2 377 754.5 370 755 366 C755.2 363.6 756.4 362.9 757.6 363.9 C760.8 366.2 763.8 369 766.7 371.8 C771 373 776.5 372.8 780.8 371.1 C783.2 368.4 785.4 366 787.6 363.9 C788.6 363 789.4 363.6 789.5 365 C790 369.8 790.4 374.8 790.6 379.6 C790.8 381.4 790.9 382.6 791 383.8" stroke-width="1.35"/>
<!-- forehead stripes -->
<path d="M774.2 374.3l1.2 3.4M776.4 374l1.4 4.2M778.6 373.8l1.3 4M780.7 373.6l1 3.2" stroke-width="0.8"/>
<!-- glasses -->
<path d="M756.2 385.2L765 385.9" stroke-width="1"/>
<path d="M775 386.9c2-.9 4.600-.9 6.600 0" stroke-width="1"/>
<path d="M767.600 382.400h4.800l3 2.800v4.200l-3 2.800h-4.800l-3-2.800v-4.200z" fill="#1d2b6b" stroke-width="1"/>
<path d="M784.200 382.300h4.800l2.900 2.800v4.100l-2.900 2.800h-4.800l-3-2.800v-4.100z" fill="#1d2b6b" stroke-width="1"/>
<!-- nose -->
<path d="M776.700 393.300h5.200l-2.500 3z" stroke-width="0.6" fill="#1d2b6b"/>
<path d="M779.400 396.300l-2.200 2.400M779.400 396.300l2.300 2.400" stroke-width="0.9"/>
<!-- whiskers -->
<path d="M771.600 394.300l-9.900.5M772.200 396.400l-9.900.6M772.200 398l-8.700 1.700M785.800 394.300l5.900.5M786 396.300l6 .9M786 397.900l4.200 1.900" stroke-width="0.75"/>
<!-- O with paw -->
<g fill="#1d2b6b" stroke="none">
<path d="M837.6 390.6c1.7 0 3.5 1.9 3.5 3.2 0 1.2-1.2 1.3-1.9 1.1-.5-.15-1-.3-1.6-.3s-1.1.15-1.6.3c-.7.2-1.9.1-1.9-1.1 0-1.3 1.8-3.2 3.5-3.2z"/>
<ellipse cx="833.9" cy="390.3" rx="1.05" ry="1.25"/><ellipse cx="836.1" cy="388.1" rx="1.1" ry="1.35"/><ellipse cx="839.2" cy="388.1" rx="1.1" ry="1.35"/><ellipse cx="841.4" cy="390.3" rx="1.05" ry="1.25"/>
</g>
<g fill="#1d2b6b" stroke="none" font-family="'Liberation Sans',sans-serif">
<text x="797.2" y="374.2" font-size="17.3" font-weight="bold" textLength="88.4" lengthAdjust="spacing" style="-webkit-text-stroke:0.3px #1d2b6b">MOTANUL</text>
<text transform="translate(797 400.1) scale(0.82 1)" x="0" y="0" font-size="25.9" style="-webkit-text-stroke:0.7px #1d2b6b">SE</text>
<text id="logoO" transform="translate(826.100 401.200) scale(1.070 1.020)" x="0" y="0" font-size="28.200" style="-webkit-text-stroke:0.900px #1d2b6b">O</text>
</g>
</svg>

</div>
</body></html>
